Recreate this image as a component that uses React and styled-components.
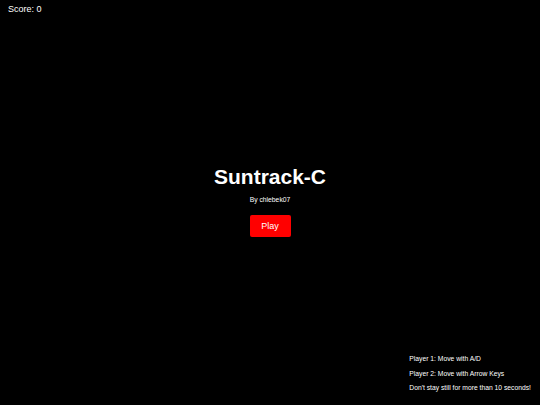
import React from 'react'
import styled, { createGlobalStyle } from 'styled-components'

const GlobalStyle = createGlobalStyle`
    html, body {
        margin: 0;
        padding: 0;
        background: #000;
    }
    body {
        font-family: 'Liberation Sans', Arial, sans-serif;
        color: #fff;
    }
`

const Screen = styled.main`
    display: grid;
    grid-template: 1fr / 1fr;
    width: 100%;
    height: 100vh;
    overflow: hidden;
    background: #000;
    > * {
        grid-area: 1 / 1;
    }
`

const Score = styled.div`
    align-self: start;
    justify-self: start;
    padding: 4px 0 0 8px;
    font-size: 9px;
    line-height: 11px;
`

const Menu = styled.section`
    align-self: center;
    justify-self: center;
    display: flex;
    flex-direction: column;
    align-items: center;
    padding-bottom: 4px;
    .title {
        margin: 0;
        font-size: 21px;
        line-height: 24px;
        font-weight: bold;
    }
    .author {
        margin: 7px 0 0;
        font-size: 6.75px;
        line-height: 8px;
    }
`

const PlayButton = styled.button`
    margin-top: 11px;
    width: 41px;
    height: 22px;
    padding: 0;
    border: none;
    border-radius: 2px;
    background: #ff0000;
    color: #fff;
    font-family: inherit;
    font-size: 9px;
    cursor: pointer;
`

const Controls = styled.ul`
    align-self: end;
    justify-self: end;
    margin: 0;
    padding: 0 9px 13px 0;
    list-style: none;
    font-size: 6.75px;
    line-height: 8px;
    li + li {
        margin-top: 6.5px;
    }
`

const controls = [
    'Player 1: Move with A/D',
    'Player 2: Move with Arrow Keys',
    "Don't stay still for more than 10 seconds!",
]

const App = () => {
    return (
        <>
            <GlobalStyle />
            <Screen>
                <Score>Score: 0</Score>
                <Menu>
                    <h1 className="title">Suntrack-C</h1>
                    <p className="author">By chlebek07</p>
                    <PlayButton>Play</PlayButton>
                </Menu>
                <Controls>
                    {controls.map(line => (
                        <li key={line}>{line}</li>
                    ))}
                </Controls>
            </Screen>
        </>
    )
}

export default App
